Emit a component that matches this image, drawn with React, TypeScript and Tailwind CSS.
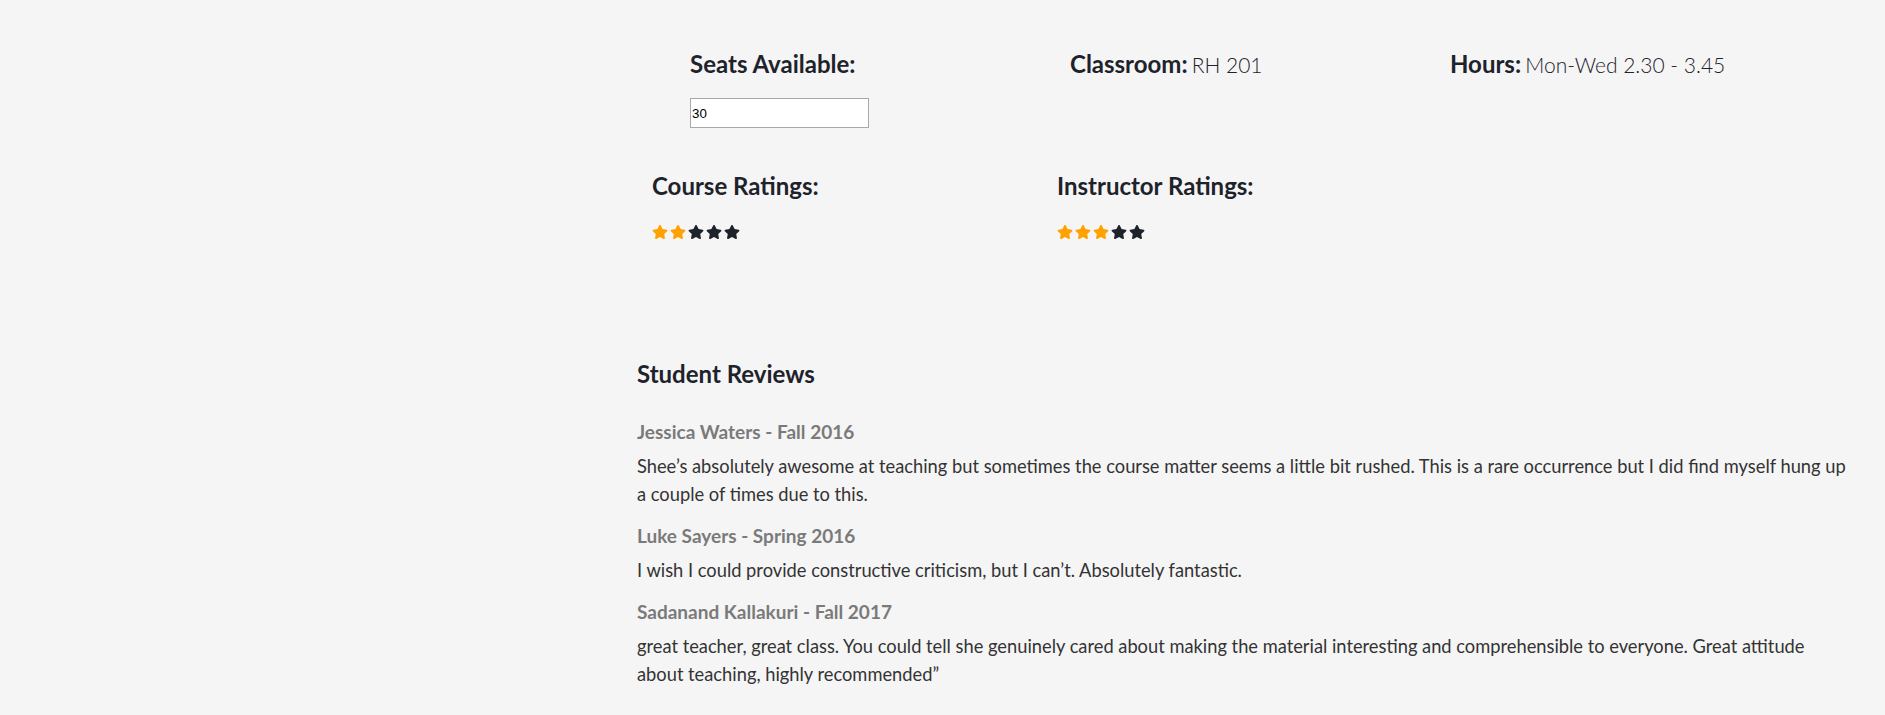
import { FaStar } from "react-icons/fa";

const reviews = [
  {
    name: "Jessica Waters - Fall 2016",
    text: "Shee\u2019s absolutely awesome at teaching but sometimes the course matter seems a little bit rushed. This is a rare occurrence but I did find myself hung up a couple of times due to this.",
  },
  {
    name: "Luke Sayers - Spring 2016",
    text: "I wish I could provide constructive criticism, but I can\u2019t. Absolutely fantastic.",
  },
  {
    name: "Sadanand Kallakuri - Fall 2017",
    text: "great teacher, great class. You could tell she genuinely cared about making the material interesting and comprehensible to everyone. Great attitude about teaching, highly recommended\u201d",
  },
];

const Stars = ({ value }: { value: number }) => (
  <div className="flex h-4 items-center gap-[2px]">
    {[1, 2, 3, 4, 5].map((i) => (
      <FaStar
        key={i}
        size={16}
        className={i <= value ? "text-[#ffa200]" : "text-[#1e232b]"}
      />
    ))}
  </div>
);

export default function App() {
  return (
    <div className="min-h-screen bg-[#f5f5f5] pl-[637px] pr-[36px] pb-6 font-['Lato',sans-serif] text-[#1e232b]">
      {/* course info */}
      <div className="flex pt-[49px] pl-[53px]">
        <div className="w-[380px]">
          <h3 className="text-[24px] leading-[30px] font-bold">Seats Available:</h3>
          <input
            defaultValue="30"
            className="mt-[19px] h-[30px] w-[179px] border border-[#a9a9a9] bg-white px-[1px] font-['Liberation_Sans',sans-serif] text-[13.3px] text-black outline-none"
          />
        </div>
        <div className="w-[380px] leading-[30px]">
          <span className="text-[24px] font-bold">Classroom:</span>{" "}
          <span className="text-[21px] font-light">RH 201</span>
        </div>
        <div className="leading-[30px]">
          <span className="text-[24px] font-bold">Hours:</span>{" "}
          <span className="text-[21px] font-light">Mon-Wed 2.30 - 3.45</span>
        </div>
      </div>

      {/* ratings */}
      <div className="mt-[43px] flex pl-[15px]">
        <div className="w-[405px]">
          <h3 className="text-[24px] leading-[30px] font-bold">Course Ratings:</h3>
          <div className="mt-[23px]">
            <Stars value={2} />
          </div>
        </div>
        <div>
          <h3 className="text-[24px] leading-[30px] font-bold">Instructor Ratings:</h3>
          <div className="mt-[23px]">
            <Stars value={3} />
          </div>
        </div>
      </div>

      {/* reviews */}
      <h2 className="mt-[119px] text-[24px] leading-[30px] font-bold">Student Reviews</h2>
      <div className="mt-[30px] flex flex-col">
        {reviews.map((r, idx) => (
          <div key={r.name} className={idx > 0 ? "mt-[15px]" : ""}>
            <h4 className="text-[19px] leading-[26px] font-bold text-[#7a7a7a]">{r.name}</h4>
            <p className="mt-[7px] text-[18.3px] leading-[28px] text-[#333]">{r.text}</p>
          </div>
        ))}
      </div>
    </div>
  );
}
